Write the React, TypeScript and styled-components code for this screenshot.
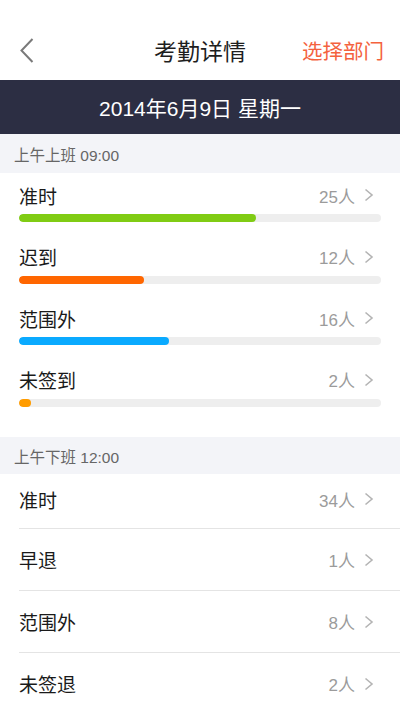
import React from "react";
import styled, { createGlobalStyle } from "styled-components";

const GlobalStyle = createGlobalStyle`
  body {
    margin: 0;
    background: #ffffff;
    font-family: "Liberation Sans", "Noto Sans CJK SC", sans-serif;
  }
`;

const Page = styled.div`
  width: 400px;
  min-height: 710px;
  background: #ffffff;
  overflow: hidden;
`;

const NavBar = styled.div`
  height: 60px;
  padding-top: 20px;
  display: grid;
  grid-template-columns: 1fr auto 1fr;
  align-items: center;
`;

const BackButton = styled.div`
  padding-left: 20px;
  display: flex;
  align-items: center;
`;

const Title = styled.div`
  font-size: 23px;
  color: #1e1e1e;
`;

const NavAction = styled.div`
  justify-self: end;
  padding-right: 16px;
  font-size: 20.5px;
  color: #f4623e;
`;

const DateBar = styled.div`
  height: 54px;
  background: #2c2e43;
  color: #ffffff;
  font-size: 21px;
  display: flex;
  align-items: center;
  justify-content: center;
`;

const SectionHeader = styled.div<{ $spaced?: boolean }>`
  height: ${(p) => (p.$spaced ? "37px" : "39px")};
  margin-top: ${(p) => (p.$spaced ? "18px" : "0")};
  background: #f3f4f8;
  color: #666666;
  font-size: 15.5px;
  padding-left: 14px;
  display: flex;
  align-items: center;
`;

const ProgressRow = styled.div`
  height: 61.5px;
  box-sizing: border-box;
  padding: 10px 19px 0 19px;
`;

const RowTop = styled.div`
  height: 24px;
  display: flex;
  align-items: center;
  justify-content: space-between;
`;

const Label = styled.div`
  font-size: 19px;
  color: #1a1a1a;
`;

const Value = styled.div`
  display: flex;
  align-items: center;
  gap: 9px;
  padding-right: 7px;
  font-size: 17px;
  color: #9b9b9b;
`;

const Track = styled.div`
  margin-top: 7px;
  height: 8px;
  border-radius: 4px;
  background: #eeeeee;
  overflow: hidden;
`;

const Fill = styled.div<{ $color: string }>`
  height: 100%;
  border-radius: 4px;
  background: ${(p) => p.$color};
`;

const ListRow = styled.div`
  height: 62px;
  box-sizing: border-box;
  margin-left: 19px;
  padding: 0 26px 0 0;
  border-top: 1px solid #e4e4e4;
  display: flex;
  align-items: center;
  justify-content: space-between;

  &:first-of-type {
    height: 54px;
    padding-bottom: 4px;
    border-top: none;
  }
`;

const ListValue = styled(Value)`
  padding-right: 0;
`;

const Chevron = () => (
  <svg width="10" height="14" viewBox="0 0 10 14">
    <path d="M1.5 1.5 L8 7 L1.5 12.5" fill="none" stroke="#b4b4b4" strokeWidth="1.6" />
  </svg>
);

const BackIcon = () => (
  <svg width="14" height="25" viewBox="0 0 14 25">
    <path d="M12.5 1 L1.5 12.5 L12.5 24" fill="none" stroke="#7a7a7a" strokeWidth="2" />
  </svg>
);

const morning = [
  { label: "准时", count: 25, color: "#80cc14", width: 237 },
  { label: "迟到", count: 12, color: "#ff6600", width: 125 },
  { label: "范围外", count: 16, color: "#0aaaff", width: 150 },
  { label: "未签到", count: 2, color: "#ff9c00", width: 12 },
];

const noon = [
  { label: "准时", count: 34 },
  { label: "早退", count: 1 },
  { label: "范围外", count: 8 },
  { label: "未签退", count: 2 },
];

const Group = styled.div``;

export default function App() {
  return (
    <Page>
      <GlobalStyle />
      <NavBar>
        <BackButton>
          <BackIcon />
        </BackButton>
        <Title>考勤详情</Title>
        <NavAction>选择部门</NavAction>
      </NavBar>
      <DateBar>2014年6月9日 星期一</DateBar>

      <SectionHeader>上午上班 09:00</SectionHeader>
      {morning.map((r) => (
        <ProgressRow key={r.label}>
          <RowTop>
            <Label>{r.label}</Label>
            <Value>
              {r.count}人
              <Chevron />
            </Value>
          </RowTop>
          <Track>
            <Fill $color={r.color} style={{ width: r.width }} />
          </Track>
        </ProgressRow>
      ))}

      <SectionHeader $spaced>上午下班 12:00</SectionHeader>
      <Group>
        {noon.map((r) => (
          <ListRow key={r.label}>
            <Label>{r.label}</Label>
            <ListValue>
              {r.count}人
              <Chevron />
            </ListValue>
          </ListRow>
        ))}
      </Group>
    </Page>
  );
}
